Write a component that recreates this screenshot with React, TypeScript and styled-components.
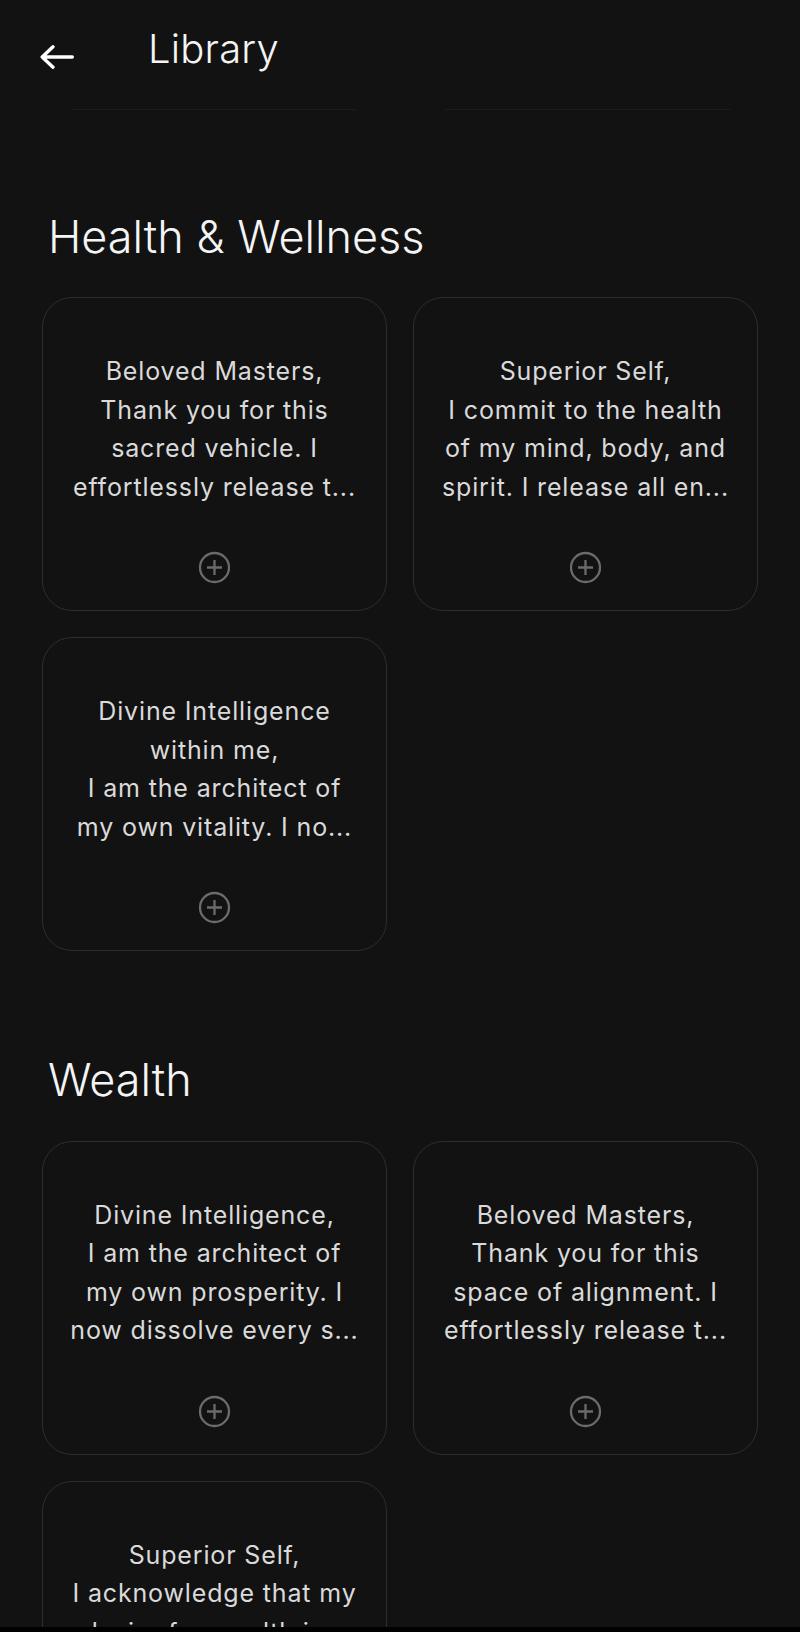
import styled, { createGlobalStyle } from "styled-components";

const GlobalStyle = createGlobalStyle`
  html, body {
    margin: 0;
    padding: 0;
    background: #121212;
  }
  * {
    box-sizing: border-box;
  }
`;

const Screen = styled.div`
  width: 800px;
  height: 1632px;
  background-color: #121212;
  display: flex;
  flex-direction: column;
  overflow: hidden;
  font-family: "Inter", "Noto Sans", sans-serif;
  color: #f2f2f2;
`;

const Header = styled.header`
  display: flex;
  align-items: flex-start;
  height: 109px;
  padding: 25px 0 0 40px;
`;

const BackButton = styled.button`
  background: none;
  border: none;
  padding: 0;
  margin-top: 20px;
  width: 34px;
  height: 24px;
  display: flex;
  cursor: pointer;
`;

const Title = styled.h1`
  margin: 0 0 0 74px;
  font-size: 40px;
  line-height: 1.21;
  font-weight: 300;
  color: #f4f4f4;
  letter-spacing: 0.2px;
`;

const Tabs = styled.div`
  display: flex;
  gap: 89px;
  padding: 0 70px 0 71px;
`;

const TabLine = styled.div`
  flex: 1;
  height: 1px;
  background-color: #1c1c1c;
`;

const Content = styled.main`
  flex: 1;
  overflow: hidden;
  padding: 100px 42px 0;
`;

const Section = styled.section`
  margin-bottom: 102px;
`;

const SectionTitle = styled.h2`
  margin: 0 0 33px 6px;
  font-size: 45px;
  font-weight: 300;
  line-height: 1.21;
  color: #f4f4f4;
`;

const CardGrid = styled.div`
  display: grid;
  grid-template-columns: 1fr 1fr;
  gap: 26px;
`;

const Card = styled.div`
  height: 314px;
  border: 1.5px solid #2e2e2e;
  border-radius: 30px;
  display: flex;
  flex-direction: column;
  align-items: center;
  padding: 54px 8px 26px;
`;

const CardText = styled.p`
  margin: 0;
  font-size: 25px;
  line-height: 38.5px;
  font-weight: 400;
  letter-spacing: 0.85px;
  text-align: center;
  white-space: nowrap;
  color: #dadada;
`;

const AddButton = styled.button`
  margin-top: auto;
  background: none;
  border: none;
  padding: 0;
  width: 33px;
  height: 33px;
  display: flex;
  cursor: pointer;
`;

const BottomBar = styled.div`
  height: 5px;
  background-color: #000;
`;

const BackArrow = () => (
  <svg width="34" height="24" viewBox="0 0 34 24" fill="none">
    <path
      d="M32.3 12H2.7M13 1.8L2.2 12L13 22.2"
      stroke="#ffffff"
      strokeWidth="3.4"
      strokeLinecap="round"
      strokeLinejoin="round"
    />
  </svg>
);

const PlusCircle = () => (
  <svg width="33" height="33" viewBox="0 0 33 33" fill="none">
    <circle cx="16.5" cy="16.5" r="14.5" stroke="#6b6b6b" strokeWidth="2.3" />
    <path d="M16.5 9V24M9 16.5H24" stroke="#6b6b6b" strokeWidth="2.3" />
  </svg>
);

type Affirmation = { lines: string[] };

const sections: { title: string; items: Affirmation[] }[] = [
  {
    title: "Health & Wellness",
    items: [
      {
        lines: [
          "Beloved Masters,",
          "Thank you for this",
          "sacred vehicle. I",
          "effortlessly release t...",
        ],
      },
      {
        lines: [
          "Superior Self,",
          "I commit to the health",
          "of my mind, body, and",
          "spirit. I release all en...",
        ],
      },
      {
        lines: [
          "Divine Intelligence",
          "within me,",
          "I am the architect of",
          "my own vitality. I no...",
        ],
      },
    ],
  },
  {
    title: "Wealth",
    items: [
      {
        lines: [
          "Divine Intelligence,",
          "I am the architect of",
          "my own prosperity. I",
          "now dissolve every s...",
        ],
      },
      {
        lines: [
          "Beloved Masters,",
          "Thank you for this",
          "space of alignment. I",
          "effortlessly release t...",
        ],
      },
      {
        lines: [
          "Superior Self,",
          "I acknowledge that my",
          "desire for wealth is a",
          "sacred expression...",
        ],
      },
    ],
  },
];

const App = () => {
  return (
    <>
      <GlobalStyle />
      <Screen>
        <Header>
          <BackButton aria-label="Back">
            <BackArrow />
          </BackButton>
          <Title>Library</Title>
        </Header>
        <Tabs>
          <TabLine />
          <TabLine />
        </Tabs>
        <Content>
          {sections.map((section) => (
            <Section key={section.title}>
              <SectionTitle>{section.title}</SectionTitle>
              <CardGrid>
                {section.items.map((item, i) => (
                  <Card key={i}>
                    <CardText>
                      {item.lines.map((line, j) => (
                        <span key={j}>
                          {line}
                          {j < item.lines.length - 1 && <br />}
                        </span>
                      ))}
                    </CardText>
                    <AddButton aria-label="Add">
                      <PlusCircle />
                    </AddButton>
                  </Card>
                ))}
              </CardGrid>
            </Section>
          ))}
        </Content>
        <BottomBar />
      </Screen>
    </>
  );
};

export default App;
